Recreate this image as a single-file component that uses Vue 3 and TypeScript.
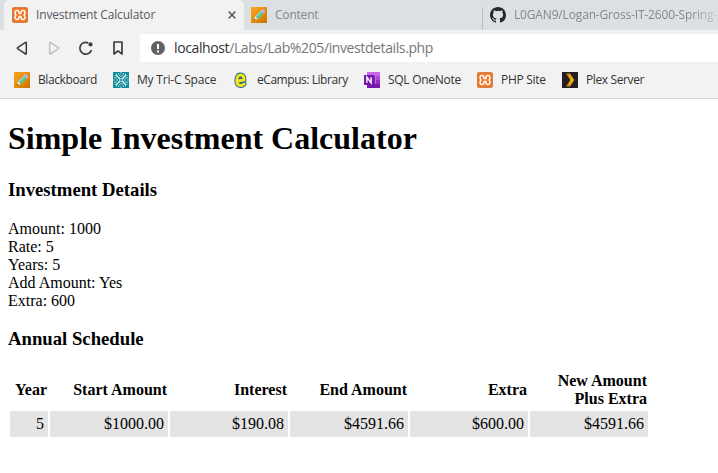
<script setup lang="ts">
interface Bookmark { label: string; icon: string; cls: string }
const bookmarks: Bookmark[] = [
  { label: 'Blackboard', icon: 'pencil', cls: 'b1' },
  { label: 'My Tri-C Space', icon: 'tric', cls: 'b2' },
  { label: 'eCampus: Library', icon: 'campus', cls: 'b3' },
  { label: 'SQL OneNote', icon: 'onenote', cls: 'b4' },
  { label: 'PHP Site', icon: 'xampp', cls: 'b5' },
  { label: 'Plex Server', icon: 'plex', cls: 'b6' },
]
const details: [string, string][] = [
  ['Amount', '1000'], ['Rate', '5'], ['Years', '5'], ['Add Amount', 'Yes'], ['Extra', '600'],
]
const headers = ['Year', 'Start Amount', 'Interest', 'End Amount', 'Extra', 'New Amount Plus Extra']
const row = ['5', '$1000.00', '$190.08', '$4591.66', '$600.00', '$4591.66']
</script>

<template>
  <svg class="defs" width="0" height="0" aria-hidden="true">
    <linearGradient id="orange" x1="0" y1="0" x2="1" y2="1">
      <stop offset="0" stop-color="#ffa51f" /><stop offset="1" stop-color="#c87400" />
    </linearGradient>
    <linearGradient id="gold" x1="0" y1="0" x2="1" y2="0">
      <stop offset="0" stop-color="#cc7c19" /><stop offset="1" stop-color="#f9be03" />
    </linearGradient>
    <symbol id="xampp" viewBox="0 0 16 16">
      <rect x=".4" y=".4" width="15.2" height="15.2" rx="1.8" fill="#f37623" stroke="#c96a35" stroke-width=".8" />
      <path d="M4.6 3.6h1.2Q7 3.9 7 5.6v.9h2v-.9q0-1.7 1.2-2h1.2q1.6.3 1.6 1.9 0 1.5-1 2.5 1 1 1 2.5 0 1.6-1.6 1.9h-1.2Q9 12.100 9 10.400v-.9H7v.9q0 1.700-1.200 2H4.600Q3 12.100 3 10.500 3 9 4 8 3 7 3 5.500q0-1.600 1.600-1.900Z" fill="none" stroke="#fff" stroke-width="1.5" stroke-linejoin="round" />
    </symbol>
    <symbol id="pencil" viewBox="0 0 16 16">
      <path d="M0 0h16v16H0z" fill="url(#orange)" />
      <path d="M3 13l.8-3.3 7.3-7.3 2.7 2.7-7.4 7.2z" fill="#f5efc2" />
      <path d="M4.4 9.8l6.1-6.2 2.2 2.3-6.1 6.1z" fill="#45bda6" />
      <path d="M5.2 10.5l6.1-6.1" stroke="#9ce6dc" stroke-width="1" />
      <path d="M10.4 3.2l1.1-1q.7-.5 1.3.1l1.1 1.2q.4.6-.1 1.2l-.9 1z" fill="#d79ae5" />
      <path d="M3 13l.3-1.5 1.2 1.2z" fill="#553a19" />
    </symbol>
    <symbol id="tric" viewBox="0 0 16 16">
      <path d="M0 0h16v16H0z" fill="#10899a" />
      <path d="M3.200 3.200l9.600 9.600M12.800 3.200l-9.600 9.600" stroke="#e8f8f8" stroke-width="1.500" />
      <path d="M5.500 1v1.500L8 4.500l2.500-2V1M5.500 15v-1.500l2.500-2 2.500 2V15M1 5.500h1.500l2 2.500-2 2.500H1M15 5.500h-1.500l-2 2.500 2 2.500H15M8 0v2M8 14v2M0 8h2M14 8h2M1.500 3.500h2v-2M12.500 1.500v2h2M1.500 12.500h2v2M12.500 14.500v-2h2" fill="none" stroke="#a9dde0" stroke-width=".9" />
      <circle cx="8" cy="8" r="1" fill="#10899a" />
    </symbol>
    <symbol id="campus" viewBox="0 0 16 16">
      <path d="M4.4 9.2 11 7.7c.2-3-1.3-4.8-3.5-4.7C4.7 3.1 3.6 6 3.8 9c.2 3 1.7 4.5 4 4.5 1.4 0 2.5-.6 3.4-1.5" fill="none" stroke="#176b9d" stroke-width="4.8" stroke-linecap="round" />
      <path d="M4.4 9.2 11 7.7c.2-3-1.3-4.8-3.5-4.7C4.7 3.1 3.6 6 3.8 9c.2 3 1.7 4.5 4 4.5 1.4 0 2.5-.6 3.4-1.5" fill="none" stroke="#fce317" stroke-width="3" stroke-linecap="round" />
      <path d="M6.2 6.5c.2-1.1.7-1.6 1.3-1.6.8 0 1 .5 1 1.2z" fill="#176b9d" />
    </symbol>
    <symbol id="onenote" viewBox="0 0 16 16">
      <path d="M3 0h13v16H3z" fill="#ca64ea" />
      <path d="M12 4h4v4h-4z" fill="#ae4bd5" /><path d="M12 8h4v4h-4z" fill="#9332bf" />
      <path d="M3 12h13v4H3z" fill="#7719aa" /><path d="M3 4h8v9H3z" fill="#501070" opacity=".65" />
      <path d="M0 3h10v10H0z" fill="#7719aa" />
      <path d="M2.9 10.8V5.2l4.2 5.6V5.2" fill="none" stroke="#fff" stroke-width="1.4" />
    </symbol>
    <symbol id="plex" viewBox="0 0 16 16">
      <path d="M0 0h16v16H0z" fill="#222021" /><path d="M4 1.5h4L12.2 8 8 14.5H4L8.2 8z" fill="url(#gold)" />
    </symbol>
    <symbol id="github" viewBox="0 0 16 16">
      <path fill="#24292e" d="M8 0C3.58 0 0 3.58 0 8c0 3.54 2.29 6.53 5.47 7.59.4.07.55-.17.55-.38 0-.19-.01-.82-.01-1.49-2.01.37-2.53-.49-2.69-.94-.09-.23-.48-.94-.82-1.13-.28-.15-.68-.52-.01-.53.63-.01 1.08.58 1.23.82.72 1.21 1.87.87 2.33.66.07-.52.28-.87.51-1.07-1.78-.2-3.64-.89-3.64-3.95 0-.87.31-1.59.82-2.15-.08-.2-.36-1.02.08-2.12 0 0 .67-.21 2.2.82a7.4 7.4 0 0 1 4 0c1.53-1.04 2.2-.82 2.2-.82.44 1.1.16 1.92.08 2.12.51.56.82 1.27.82 2.15 0 3.07-1.87 3.75-3.65 3.95.29.25.54.73.54 1.48 0 1.07-.01 1.93-.01 2.2 0 .21.15.46.55.38A8.01 8.01 0 0 0 16 8c0-4.42-3.58-8-8-8Z" />
    </symbol>
  </svg>

  <div class="browser">
    <header class="tabs">
      <div class="tab active">
        <svg class="icon"><use href="#xampp" /></svg><span class="t1">Investment Calculator</span>
        <svg class="close" viewBox="0 0 8 8"><path d="M.6.6l6.8 6.8M7.4.6.6 7.4" stroke="#4d5156" stroke-width="1.4" /></svg>
      </div>
      <div class="tab content-tab"><svg class="icon"><use href="#pencil" /></svg><span class="t2">Content</span></div>
      <div class="tab git-tab"><svg class="icon"><use href="#github" /></svg><span class="t3">L0GAN9/Logan-Gross-IT-2600-Spring-</span></div>
    </header>
    <nav class="toolbar">
      <svg class="controls" viewBox="0 0 140 28" fill="none" stroke="#3b3e43" stroke-width="1.5" stroke-linejoin="round">
        <path d="M26.3 8.6v11q0 .8-.7.4l-8-5.3q-.6-.5 0-1l8-5.4q.7-.4.7.3Z" />
        <path d="M49.7 8.6v11q0 .8.7.4l8-5.3q.6-.5 0-1l-8-5.4q-.7-.4-.7.3Z" stroke="#c0c1c3" />
        <path d="M88.2 8.9A5.9 5.9 0 1 0 91.4 16" stroke-width="1.7" /><circle cx="90.5" cy="10.4" r="2.1" fill="#3b3e43" stroke="none" />
        <path d="M114 8h8v12l-4-3.2-4 3.2Z" stroke-width="1.7" />
      </svg>
      <div class="address">
        <svg class="info" viewBox="0 0 14 14"><circle cx="7" cy="7" r="7" fill="#5f6368" /><path d="M7 3v5M7 9.5v2" stroke="#fff" stroke-width="2" /></svg>
        <span class="url"><b>localhost</b>/Labs/Lab%205/investdetails.php</span>
      </div>
    </nav>
    <nav class="bookmarks">
      <div v-for="b in bookmarks" :key="b.label" class="bookmark" :class="b.cls">
        <svg class="icon"><use :href="'#' + b.icon" /></svg><span>{{ b.label }}</span>
      </div>
    </nav>
    <main>
      <h1>Simple Investment Calculator</h1>
      <h3>Investment Details</h3>
      <div v-for="[k, v] in details" :key="k" class="detail">{{ k }}: {{ v }}</div>
      <h3>Annual Schedule</h3>
      <table>
        <thead><tr><th v-for="h in headers" :key="h">{{ h }}</th></tr></thead>
        <tbody><tr><td v-for="(c, i) in row" :key="i">{{ c }}</td></tr></tbody>
      </table>
    </main>
  </div>
</template>

<style>
body { margin: 0; background: #fff; overflow: hidden; }
</style>
<style scoped>
.defs { position: absolute; }
.browser { width: 718px; height: 473px; overflow: hidden; font: 12px/16px "Open Sans", sans-serif; color: #333; }
.icon { width: 16px; height: 16px; flex: none; display: block; }
.tabs { height: 30px; display: flex; background: #dce0e3; padding-left: 4px; box-sizing: border-box; }
.tab { display: flex; align-items: center; gap: 8px; box-sizing: border-box; color: #84888b; white-space: nowrap; }
.active { width: 240px; padding: 0 8px; background: #f2f2f2; border-radius: 5px 5px 0 0; color: #55595e; }
.close { width: 8px; height: 8px; margin-left: auto; }
.content-tab { width: 238px; padding-left: 7px; }
.git-tab { flex: 1; min-width: 0; padding-left: 8px; background: linear-gradient(#b9bdc0, #b9bdc0) 0 7px / 1px 23px no-repeat; }
.t1 { letter-spacing: -.16px; }
.t2 { letter-spacing: -.2px; }
.t3 { letter-spacing: -.16px; mask-image: linear-gradient(to right, #000 175px, transparent 212px); }
.toolbar { height: 32px; padding-top: 4px; box-sizing: border-box; display: flex; background: #f2f2f2; }
.controls { width: 140px; height: 28px; flex: none; }
.address { flex: 1; height: 28px; background: #fff; border-radius: 4px 0 0 4px; display: flex; align-items: center; gap: 9px; padding-left: 11px; }
.info { width: 14px; height: 14px; }
.url { font-size: 14px; line-height: 20px; letter-spacing: -.39px; color: #75787b; white-space: nowrap; }
.url b { font-weight: 400; color: #303236; }
.bookmarks { height: 37px; box-sizing: border-box; padding: 0 0 0 14px; border-bottom: 1px solid #d3d5d7; background: #f2f2f2; display: flex; align-items: center; }
.bookmark { display: flex; align-items: center; gap: 8px; white-space: nowrap; flex: none; }
.b1 { width: 99px; letter-spacing: -.4px; }
.b2 { width: 120px; letter-spacing: -.2px; }
.b3 { width: 131px; letter-spacing: -.45px; }
.b4 { width: 113px; letter-spacing: -.27px; }
.b5 { width: 85px; letter-spacing: -.3px; }
.b6 { letter-spacing: -.38px; }
main { display: flow-root; padding: 0 8px; color: #000; font: 16px/normal "Liberation Serif", serif; }
h1 { font-size: 32px; margin: 21.44px 0; }
h3 { font-size: 18.72px; margin: 18.72px 0; }
.detail { line-height: 18px; }
table { border-spacing: 2px; table-layout: fixed; width: 642px; }
th, td { text-align: right; box-sizing: border-box; }
th { padding: 1px; width: 118px; line-height: 18px; }
th:first-child { width: 38px; }
td { padding: 4px; background: #e4e4e4; line-height: 18px; }
</style>
